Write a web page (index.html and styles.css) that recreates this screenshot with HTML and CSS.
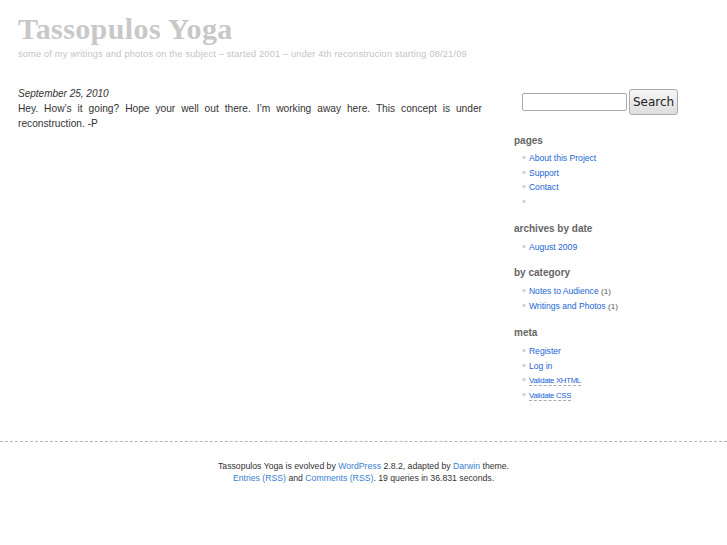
FILE: index.html
```html
<!DOCTYPE html>
<html>
<head>
<meta charset="utf-8">
<link rel="stylesheet" href="styles.css">
</head>
<body>
<div class="page">
  <header class="header">
    <h1 class="title">Tassopulos Yoga</h1>
    <div class="tagline">some of my writings and photos on the subject – started 2001 – under 4th reconstrucion starting 08/21/09</div>
  </header>
  <div class="wrap">
    <main class="content">
      <div class="date">September 25, 2010</div>
      <p class="post">Hey. How’s it going? Hope your well out there. I’m working away here. This concept is under reconstruction. -P</p>
    </main>
    <aside class="sidebar">
      <form class="search"><input class="search-input" type="text"><button class="search-btn" type="button">Search</button></form>
      <h2 class="side-h">pages</h2>
      <ul class="side-list">
        <li><a href="#">About this Project</a></li>
        <li><a href="#">Support</a></li>
        <li><a href="#">Contact</a></li>
        <li>&nbsp;</li>
      </ul>
      <h2 class="side-h">archives by date</h2>
      <ul class="side-list">
        <li><a href="#">August 2009</a></li>
      </ul>
      <h2 class="side-h">by category</h2>
      <ul class="side-list">
        <li><a href="#">Notes to Audience</a> <span class="count">(1)</span></li>
        <li><a href="#">Writings and Photos</a> <span class="count">(1)</span></li>
      </ul>
      <h2 class="side-h">meta</h2>
      <ul class="side-list">
        <li><a href="#">Register</a></li>
        <li><a href="#">Log in</a></li>
        <li><a href="#" class="small">Validate XHTML</a></li>
        <li><a href="#" class="small">Validate CSS</a></li>
      </ul>
    </aside>
  </div>
  <footer class="footer">
    <div>Tassopulos Yoga is evolved by <a href="#">WordPress</a> 2.8.2, adapted by <a href="#">Darwin</a> theme.</div>
    <div><a href="#">Entries (RSS)</a> and <a href="#">Comments (RSS)</a>. 19 queries in 36.831 seconds.</div>
  </footer>
</div>
</body>
</html>
```
FILE: styles.css
```css
html, body { margin: 0; padding: 0; background: #fff; }
body { font-family: "Liberation Sans", Arial, sans-serif; color: #333; }
a { color: #1a66d4; text-decoration: none; }
.header { padding: 13px 18px 0; }
.title { margin: 0; font-family: "Liberation Serif", "Times New Roman", serif; font-weight: bold; font-size: 30px; line-height: 32px; color: #c8c8c8; letter-spacing: 0.4px; }
.tagline { margin-top: 3px; font-size: 9.2px; color: #c4c4c4; line-height: 12px; letter-spacing: 0.2px; }
.wrap { display: flex; padding: 0 18px; margin-top: 27px; }
.content { width: 464px; }
.date { font-size: 10px; font-style: italic; color: #333; line-height: 14px; }
.post { margin: 0; font-size: 10.2px; line-height: 15px; text-align: justify; color: #333; }
.sidebar { margin-left: 32px; width: 180px; }
.search { display: flex; align-items: center; margin: 2px 0 0 8px; }
.search-input { width: 101px; height: 16px; border: 1px solid #aaa; border-radius: 2px; padding: 0 1px; margin: 0; background: #fff; }
.search-btn { margin-left: 2px; height: 26px; width: 49px; padding: 0; border: 1px solid #aaa; border-radius: 3px; background: linear-gradient(#f6f6f6, #dedede); font-family: "DejaVu Sans", sans-serif; font-size: 12px; color: #222; }
.side-h { margin: 12px 0 0; font-size: 10px; line-height: 14px; color: #666; font-weight: bold; }
.sidebar .search + .side-h { margin-top: 19px; }
.side-list { list-style: none; margin: 4px 0 0; padding: 0 0 0 8px; font-size: 8.6px; }
.sidebar .search + .side-h + .side-list { margin-top: 3px; }
.side-list li { color: #333; height: 14.7px; line-height: 14.7px; }
.side-list li::before { content: "»"; color: #aaa; font-size: 7px; margin-right: 3px; line-height: 0; vertical-align: 1px; }
.side-list .small { font-size: 7.8px; letter-spacing: -0.3px; border-bottom: 1px dashed #aaa; }
.count { color: #555; font-size: 8px; }
.footer { margin-top: 38px; border-top: 1px dashed #b5b5b5; padding-top: 18px; text-align: center; font-size: 8.7px; line-height: 12px; color: #333; }
.footer a { color: #3a7fd0; }
```
